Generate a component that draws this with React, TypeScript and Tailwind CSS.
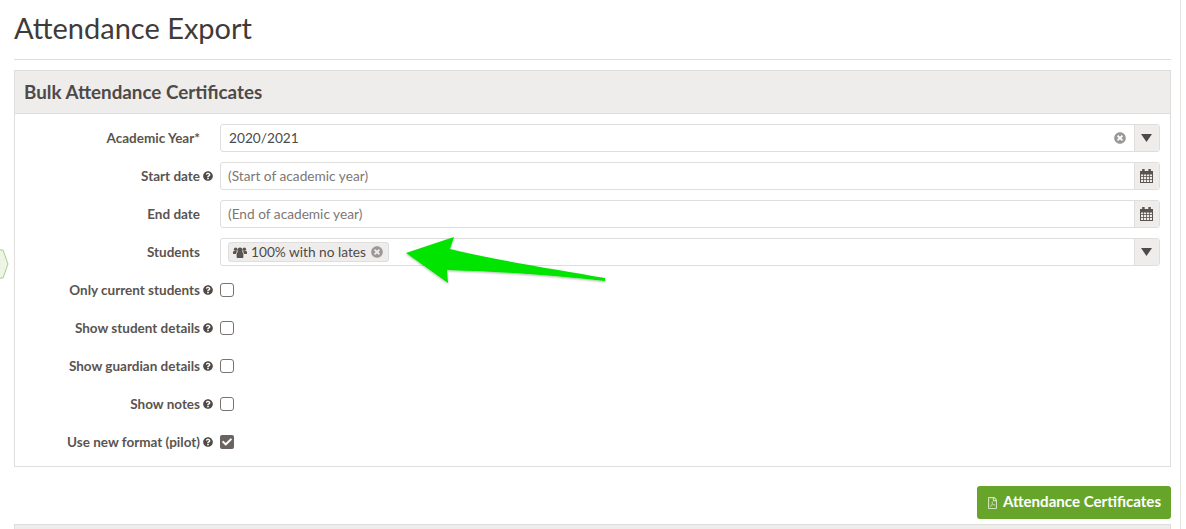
import { FaQuestionCircle, FaTimesCircle, FaCheck, FaRegFilePdf } from "react-icons/fa";

const font = "font-['Lato','Noto_Sans',sans-serif]";

function Help() {
  return <FaQuestionCircle className="ml-[3px] w-[10px] h-[10px] text-[#4f4a47] shrink-0" />;
}

function Label({ text, help }: { text: string; help?: boolean }) {
  return (
    <div className="w-[198px] shrink-0 flex items-center justify-end font-bold text-[13.5px] text-[#5a5451]">
      <span className="whitespace-nowrap">{text}</span>
      {help ? <Help /> : <span className="w-[13px] shrink-0" />}
    </div>
  );
}

function Caret() {
  return (
    <svg width="11" height="8" viewBox="0 0 11 8"><path d="M0 0h11L5.5 8z" fill="#4f4a47" /></svg>
  );
}

function Users() {
  return (
    <svg className="mr-[4px] shrink-0" width="14" height="11" viewBox="0 0 14 11" fill="#5a5451">
      <circle cx="7" cy="3" r="2.6" />
      <circle cx="2.6" cy="2.2" r="1.7" />
      <circle cx="11.4" cy="2.2" r="1.7" />
      <path d="M3.6 7c0-1.3 1-1.9 1.8-1.9h3.2c.8 0 1.8.6 1.8 1.9v3c0 .6-.4 1-1 1H4.6c-.6 0-1-.4-1-1z" />
      <path d="M0 5.3C0 4.5.6 4 1.3 4h2c.3.4.6.7 1 1-.9.3-1.6 1.1-1.6 2.1H.7C.3 7.1 0 6.8 0 6.4z" />
      <path d="M14 5.3c0-.8-.6-1.3-1.3-1.3h-2c-.3.4-.6.7-1 1 .9.3 1.6 1.1 1.6 2.1h2c.4 0 .7-.3.7-.7z" />
    </svg>
  );
}

function Calendar() {
  return (
    <svg width="13" height="14" viewBox="0 0 13 14" fill="none" stroke="#5a5451" strokeWidth="1">
      <rect x="0.5" y="2.5" width="12" height="11" />
      <rect x="0.5" y="2.5" width="12" height="2.5" fill="#5a5451" />
      <path d="M3.5 5v8M6.5 5v8M9.5 5v8M1 7.5h11M1 10.5h11" strokeWidth="0.8" />
      <rect x="2.7" y="0.5" width="1.4" height="3.5" fill="#5a5451" />
      <rect x="8.9" y="0.5" width="1.4" height="3.5" fill="#5a5451" />
    </svg>
  );
}

function Addon({ children }: { children: React.ReactNode }) {
  return (
    <div className="w-[25px] shrink-0 self-stretch flex items-center justify-center pr-[1px] bg-[#eeedec] border-l border-[#e0dedd] rounded-r-[3px]">
      {children}
    </div>
  );
}

function Field({ children, addon }: { children: React.ReactNode; addon: React.ReactNode }) {
  return (
    <div className="ml-[7px] w-[940px] h-[28px] flex items-center border border-[#e0dedd] rounded-[3px] bg-white">
      <div className="flex-1 min-w-0 flex items-center text-[13.7px] pl-[7px] pr-[8px]">{children}</div>
      <Addon>{addon}</Addon>
    </div>
  );
}

function CheckRow({ text, checked }: { text: string; checked?: boolean }) {
  return (
    <div className="flex items-center h-[28px]">
      <Label text={text} help />
      {checked ? (
        <div className="ml-[7px] w-[14px] h-[14px] rounded-[2px] bg-[#6b6360] flex items-center justify-center">
          <FaCheck className="w-[10px] h-[10px] text-white" />
        </div>
      ) : (
        <div className="ml-[7px] w-[14px] h-[14px] rounded-[3px] border border-[#7a7370] bg-white" />
      )}
    </div>
  );
}

export default function App() {
  return (
    <div className={`${font} relative w-[1186px] h-[529px] overflow-hidden bg-white text-[#4f4a47]`}>
      <div className="w-[1181px] h-full pl-[14px] pr-[9px] border-r border-[#e6e3e3]">
        <div className="h-[60px] border-b border-[#e0dedd] flex items-start">
          <h1 className="text-[29px] leading-[36px] mt-[10px] text-[#3f3b39] font-normal">Attendance Export</h1>
        </div>
        <section className="mt-[10px] h-[397px] border border-[#e0dedd]">
          <div className="h-[43px] bg-[#eeedec] border-b border-[#e0dedd] flex items-center pl-[9px]">
            <h2 className="text-[18.8px] font-bold text-[#4f4a47]">Bulk Attendance Certificates</h2>
          </div>
          <div className="pt-[10px] flex flex-col gap-[10px]">
            <div className="flex items-center">
              <Label text="Academic Year*" />
              <Field addon={<Caret />}>
                <span className="flex-1 pl-[1px] text-[#4f4a47]">2020/2021</span>
                <FaTimesCircle className="w-[12px] h-[12px] text-[#9c9896]" />
              </Field>
            </div>
            <div className="flex items-center">
              <Label text="Start date" help />
              <Field addon={<Calendar />}>
                <span className="text-[#7d7775]">(Start of academic year)</span>
              </Field>
            </div>
            <div className="flex items-center">
              <Label text="End date" />
              <Field addon={<Calendar />}>
                <span className="text-[#7d7775]">(End of academic year)</span>
              </Field>
            </div>
            <div className="flex items-center">
              <Label text="Students" />
              <Field addon={<Caret />}>
                <span className="h-[20px] w-[161px] flex items-center bg-[#eeedec] border border-[#e0dedd] rounded-[3px] pl-[4px] text-[#4f4a47]">
                  <Users />
                  <span className="whitespace-nowrap">100% with no lates</span>
                  <FaTimesCircle className="ml-auto mr-[5px] w-[12px] h-[12px] text-[#9c9896]" />
                </span>
              </Field>
            </div>
            <CheckRow text="Only current students" />
            <CheckRow text="Show student details" />
            <CheckRow text="Show guardian details" />
            <CheckRow text="Show notes" />
            <CheckRow text="Use new format (pilot)" checked />
          </div>
        </section>
        <div className="mt-[19px] flex justify-end">
          <button className="w-[194px] h-[33px] rounded-[3px] bg-[#67a52a] text-white font-bold text-[15.1px] flex items-center justify-center">
            <FaRegFilePdf className="w-[11px] h-[12px] mr-[5px] text-[#cfe2bb]" />
            <span className="pb-[3px]">Attendance Certificates</span>
          </button>
        </div>
        <div className="mt-[5px] h-[10px] bg-[#eeedec] border border-[#e0dedd]" />
      </div>

      <svg className="absolute left-0 top-[248px]" width="10" height="32" viewBox="0 0 10 32">
        <path d="M-3 2 L3 2 L8 16 L3 30 L-3 30 Z" fill="#eef5e6" stroke="#a9cf86" strokeWidth="1" />
      </svg>
      <svg className="absolute left-[400px] top-[230px]" width="212" height="60" viewBox="0 0 212 60">
        <defs>
          <filter id="s" x="-10%" y="-20%" width="120%" height="140%">
            <feDropShadow dx="0" dy="1" stdDeviation="1" floodColor="#000" floodOpacity="0.3" />
          </filter>
        </defs>
        <path d="M6 23 L54 7 L50 19 C100 31 160 40 205 48 L205 51 C160 46 110 42 47 40 L48 53 Z" fill="#00e400" filter="url(#s)" />
      </svg>
    </div>
  );
}
